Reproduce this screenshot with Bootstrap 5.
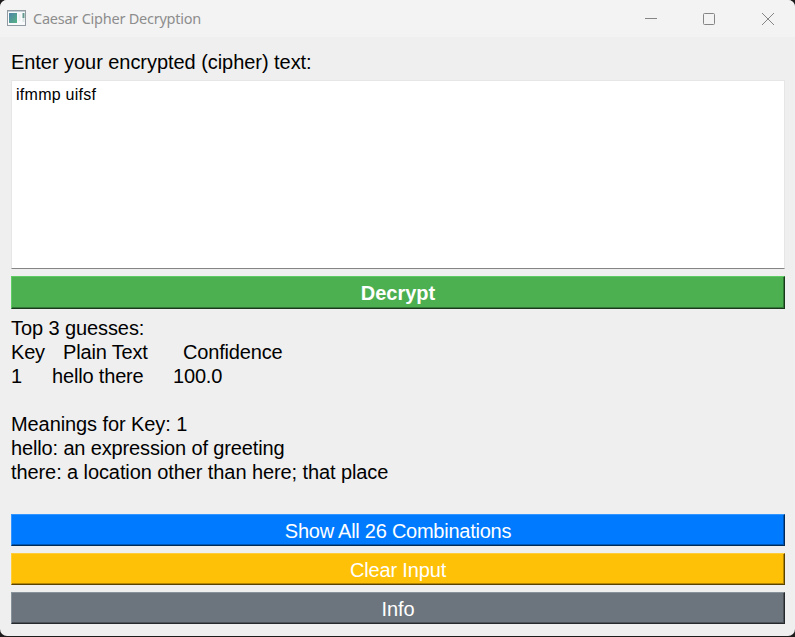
<!DOCTYPE html>
<html lang="en">
<head>
<meta charset="utf-8">
<title>Caesar Cipher Decryption</title>
<link href="https://cdn.jsdelivr.net/npm/bootstrap@5.3.0/dist/css/bootstrap.min.css" rel="stylesheet">
<style>
  body { background: #1e1b1c; font-family: "Liberation Sans", Arial, sans-serif; color: #000; font-size: 20px; line-height: 24px; }
  .window { height: 636px; background: #efefef; border-radius: 7px; }
  .titlebar { height: 37px; background: #f3f3f3; color: #8d8d8d; padding-left: 7px; font-family: "Noto Sans", "Open Sans", sans-serif; }
  .app-icon { margin-bottom: 1px; }
  .caption { font-size: 14.5px; line-height: 20px; margin: 0 0 2px 6px; letter-spacing: -.24px; }
  .controls { gap: 46px; margin-right: 21px; }
  .controls .close-glyph { margin-left: 1px; }
  .client { padding: 13px 10px 12px 11px; }
  .client label { letter-spacing: -.05px; }
  .cipher { height: 189px; margin: 6px 0 7px; padding: 5px 4px; border: 1px solid #e6e6e6; border-bottom-color: #858585; border-radius: 0; font-size: 16px; line-height: 18px; color: #000; letter-spacing: .27px; resize: none; }
  .cipher:focus { box-shadow: none; border-color: #e6e6e6; }
  .result { margin: 7px 0 30px; }
  .result > div { white-space: pre; height: 24px; letter-spacing: -.09px; }
  .result .greeting { letter-spacing: -.14px; }
  .result .heads, .result .values { display: grid; letter-spacing: -.17px; }
  .heads { grid-template-columns: 52px 120px 1fr; }
  .values { grid-template-columns: 41px 121px 1fr; }
  .bevel { height: 32px; padding: 0; border-radius: 0; border: 1px solid; color: #fff; font-size: 20px; line-height: 32px; letter-spacing: -.15px; }
  .bevel:hover { color: #fff; }
  .decrypt { height: 33px; letter-spacing: 0; background: #4caf50; border-color: #5fcb63 #183a1a #183a1a #5fcb63; box-shadow: inset -1px -1px #347837; }
  .combos { letter-spacing: -.25px; background: #007bff; border-color: #3395ff #002b59 #002b59 #3395ff; box-shadow: inset -1px -1px #0056b3; }
  .clear { background: #ffc107; border-color: #ffcd39 #5a4302 #5a4302 #ffcd39; box-shadow: inset -1px -1px #b38705; }
  .info { background: #6c757d; border-color: #87929b #25292c #25292c #87929b; box-shadow: inset -1px -1px #4b5157; }
  .actions { gap: 7px; }
</style>
<script src="https://cdn.jsdelivr.net/npm/bootstrap@5.3.0/dist/js/bootstrap.bundle.min.js"></script>
</head>
<body class="overflow-hidden">
<main class="window d-flex flex-column overflow-hidden">
  <header class="titlebar d-flex align-items-center flex-shrink-0">
    <svg class="app-icon" width="20" height="16" viewBox="0 0 20 16">
      <defs><linearGradient id="pane" x1="0" y1="0" x2="1" y2="1"><stop offset="0" stop-color="#4f83aa"/><stop offset="1" stop-color="#57b383"/></linearGradient></defs>
      <rect x=".5" y=".5" width="18" height="15" fill="#f9fafb" stroke="#929ba2"/>
      <path d="M1 1.5h17" stroke="#c3ccd3"/>
      <rect x="2" y="3" width="8" height="10" fill="url(#pane)"/>
      <path d="M12.5 4v7" stroke="#edf0f2" stroke-width="2"/>
      <path d="M16.5 3v5" stroke="#64998f" stroke-width="2"/>
      <path d="M16.5 8v4" stroke="#dce6e4" stroke-width="2"/>
    </svg>
    <span class="caption">Caesar Cipher Decryption</span>
    <div class="controls d-flex align-items-center ms-auto">
      <svg width="12" height="12" fill="none" stroke="#858585"><path d="M0 5.5h12"/></svg>
      <svg width="12" height="12" fill="none" stroke="#858585"><rect x=".5" y=".5" width="11" height="11" rx="1"/></svg>
      <svg class="close-glyph" width="12" height="12" fill="none" stroke="#858585"><path d="M0 0l12 12M12 0L0 12"/></svg>
    </div>
  </header>
  <div class="client d-flex flex-column flex-grow-1">
    <label for="cipher">Enter your encrypted (cipher) text:</label>
    <textarea id="cipher" class="cipher form-control" spellcheck="false">ifmmp uifsf</textarea>
    <button class="btn bevel decrypt w-100 fw-bold" type="button">Decrypt</button>
    <section class="result">
      <div>Top 3 guesses:</div>
      <div class="heads"><span>Key</span><span>Plain Text</span><span>Confidence</span></div>
      <div class="values"><span>1</span><span>hello there</span><span>100.0</span></div>
      <div> </div>
      <div>Meanings for Key: 1</div>
      <div class="greeting">hello: an expression of greeting</div>
      <div>there: a location other than here; that place</div>
    </section>
    <div class="actions d-grid mt-auto">
      <button class="btn bevel combos" type="button">Show All 26 Combinations</button>
      <button class="btn bevel clear" type="button">Clear Input</button>
      <button class="btn bevel info" type="button">Info</button>
    </div>
  </div>
</main>
</body>
</html>
